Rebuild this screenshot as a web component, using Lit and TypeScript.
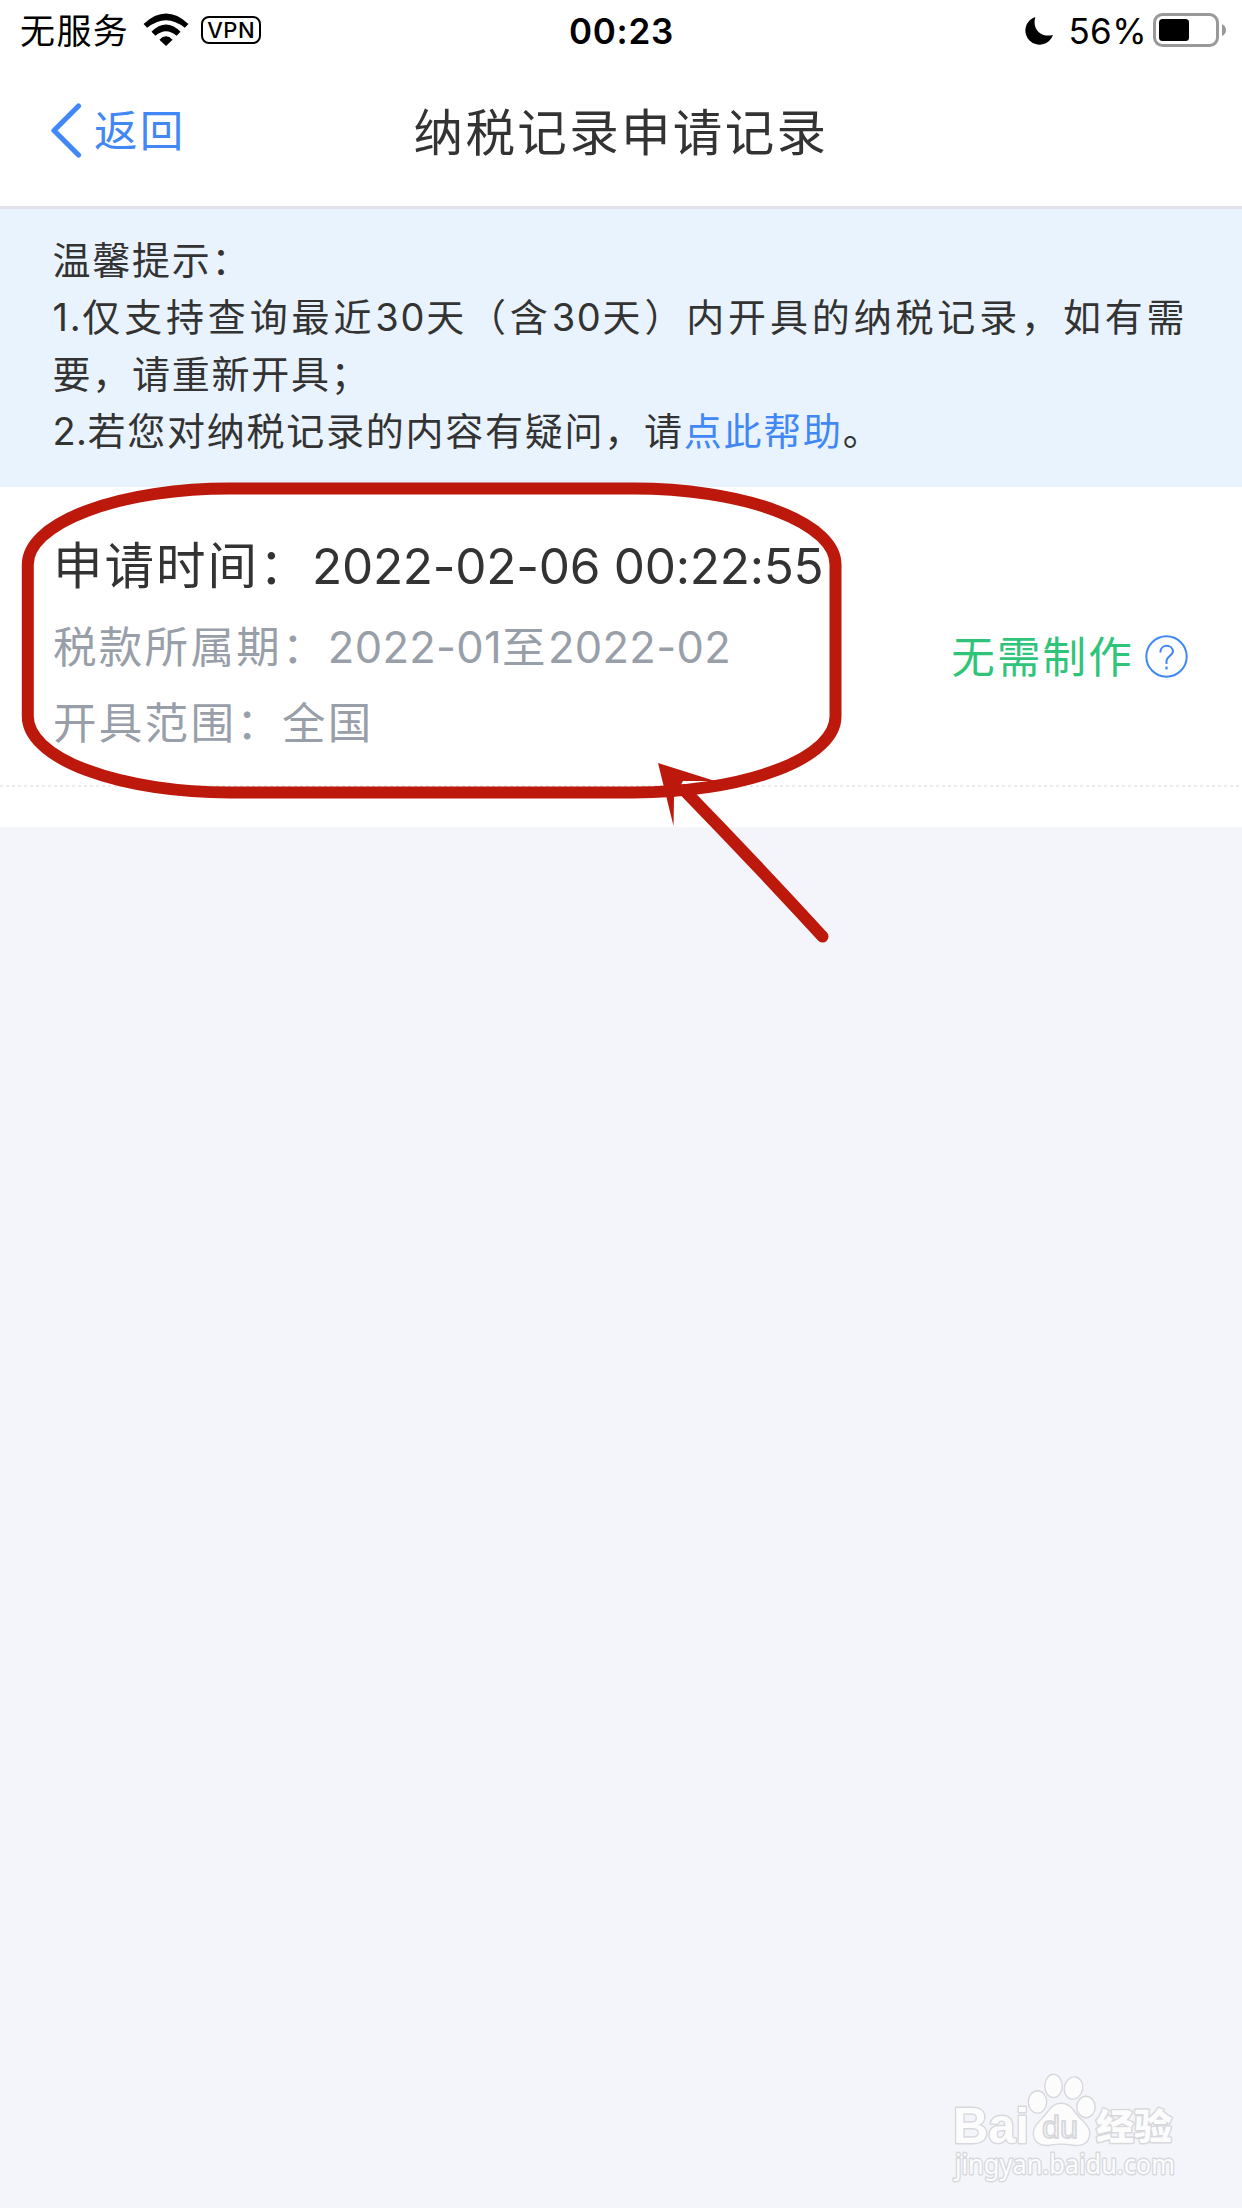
import { LitElement, html, css, svg } from "lit";
import { customElement } from "lit/decorators.js";

@customElement("status-bar")
class StatusBar extends LitElement {
  static styles = css`
    :host { display: grid; grid-template-columns: 1fr auto 1fr; align-items: center; height: 62px; padding: 0 16px 0 20px; color: #000; font-size: 35px; line-height: 1; }
    .side { display: flex; align-items: center; }
    .right { justify-content: flex-end; }
    .carrier { letter-spacing: 1.4px; padding-top: 1px; }
    .wifi { width: 46px; height: 33px; margin-left: 14px; margin-top: -3px; }
    .vpn { box-sizing: border-box; width: 60px; height: 28px; margin-left: 12px; margin-top: -2px; border: 2.4px solid #000; border-radius: 8px; font-size: 22px; font-weight: 500; line-height: 24px; text-align: center; letter-spacing: 0.6px; }
    .time { font-weight: 600; letter-spacing: 0.7px; margin-right: 3px; }
    .moon { width: 28px; height: 28px; margin-right: 15px; }
    .pct { letter-spacing: 0.4px; }
    .battery { width: 74px; height: 34px; margin-left: 6px; margin-right: -1px; margin-top: -2px; }
  `;
  render() {
    return html`
      <div class="side">
        <span class="carrier">无服务</span>
        <svg class="wifi" viewBox="429 38 138 100">
          <path d="M430 71Q498 8 566 71L555 83Q498 37 441 83Z" />
          <path d="M454 95Q498 51 542 95L530 107Q498 79 466 107Z" />
          <path d="M478 119Q498 98 518 119L498 138Z" />
        </svg>
        <span class="vpn">VPN</span>
      </div>
      <span class="time">00:23</span>
      <div class="side right">
        <svg class="moon" viewBox="138 51 84 84"><path d="M169 51A42.500 42.500 0 1 0 222 105C187 114 158 88 169 51Z" /></svg>
        <span class="pct">56%</span>
        <svg class="battery" viewBox="0 0 74 34">
          <rect x="1.500" y="1.500" width="63" height="31" rx="8" fill="none" stroke="#999" stroke-width="3" />
          <rect x="6" y="6" width="30" height="22" rx="3.500" />
          <path d="M69 11Q73 13 73 17T69 23Z" fill="#999" />
        </svg>
      </div>
    `;
  }
}

@customElement("nav-header")
class NavHeader extends LitElement {
  static styles = css`
    :host { display: grid; grid-template-columns: 1fr auto 1fr; align-items: center; box-sizing: border-box; height: 147px; padding: 0 50px 4px 50px; border-bottom: 3px solid #e2e3e8; line-height: 1; }
    .back { display: flex; align-items: center; color: #4187f6; font-size: 43.500px; letter-spacing: 2.200px; }
    .chevron { width: 32px; height: 56px; margin-right: 12px; margin-top: -4px; }
    .title { font-size: 49.500px; letter-spacing: 2.350px; color: #333; padding-top: 3px; }
  `;
  render() {
    return html`
      <span class="back">
        <svg class="chevron" viewBox="0 0 32 56"><path d="M28.500 4L4 28.500L28.500 53" fill="none" stroke="#4187f6" stroke-width="5.200" stroke-linecap="round" stroke-linejoin="round" /></svg>
        返回
      </span>
      <span class="title">纳税记录申请记录</span>
      <span></span>
    `;
  }
}

@customElement("tip-box")
class TipBox extends LitElement {
  static styles = css`
    :host { display: block; box-sizing: border-box; height: 278px; padding: 23px 0 0 52.5px; background: #e9f3fe; color: #333; font-size: 38px; line-height: 57px; letter-spacing: 1.750px; white-space: nowrap; }
    .wide { letter-spacing: 3.850px; }
    .num { letter-spacing: 0.400px; }
    .wide .num { letter-spacing: 1.700px; }
    .link { color: #4187f6; }
  `;
  render() {
    return html`
      <div>温馨提示：</div>
      <div class="wide"><span class="num">1.</span>仅支持查询最近<span class="num">30</span>天（含<span class="num">30</span>天）内开具的纳税记录，如有需</div>
      <div>要，请重新开具；</div>
      <div><span class="num">2.</span>若您对纳税记录的内容有疑问，请<span class="link">点此帮助</span>。</div>
    `;
  }
}

@customElement("record-card")
class RecordCard extends LitElement {
  static styles = css`
    :host { display: block; box-sizing: border-box; height: 340px; background: #fff; }
    .row { display: flex; justify-content: space-between; box-sizing: border-box; height: 298px; padding: 40px 53px 0; white-space: nowrap; }
    .rule { height: 2px; background: repeating-linear-gradient(90deg, #ebebeb 0 3px, #fff 3px 6px); }
    .info { color: #999fa9; font-size: 43.500px; letter-spacing: 2.300px; line-height: 69px; }
    .main { color: #333; font-size: 49.500px; letter-spacing: 2.000px; line-height: 78px; }
    .main .date { margin-left: 1.500px; letter-spacing: -0.250px; }
    .period { line-height: 84px; }
    .date { letter-spacing: 0.300px; }
    .status { display: flex; align-items: center; height: 60px; margin-top: 97px; color: #30c47b; font-size: 43.500px; letter-spacing: 2.200px; }
    .help { width: 43px; height: 43px; margin-left: 11px; margin-right: 1px; margin-top: 5px; }
  `;
  render() {
    return html`
      <div class="row">
        <div class="info">
          <div class="main">申请时间：<span class="date">2022-02-06 00:22:55</span></div>
          <div class="period">税款所属期：<span class="date">2022-01</span>至<span class="date">2022-02</span></div>
          <div>开具范围：全国</div>
        </div>
        <div class="status">
          无需制作
          <svg class="help" viewBox="0 0 43 43" fill="none" stroke="#4187f6">
            <circle cx="21.500" cy="21.500" r="20.200" stroke-width="2" />
            <path d="M15.500 17.500V16A6.300 6 0 0 1 28 16C28 20.500 21.500 21.500 21.500 26V29" stroke-width="2" />
            <path d="M21.500 31.500V34.500" stroke-width="2.200" />
          </svg>
        </div>
      </div>
      <div class="rule"></div>
    `;
  }
}

@customElement("app-root")
class AppRoot extends LitElement {
  static styles = css`
    :host { display: block; position: relative; width: 1242px; height: 2208px; overflow: hidden; background: #fff; font-family: Inter, "Noto Sans CJK SC", sans-serif; }
    .page { display: flex; flex-direction: column; height: 100%; }
    .rest { flex: 1; background: #f4f5fa; }
    .overlay { position: absolute; inset: 0; width: 1242px; height: 2208px; pointer-events: none; }
    .mark { fill: #fcfcfd; stroke: #d6d8dc; stroke-width: 2.800px; paint-order: stroke; stroke-linejoin: round; }
    .brand { font: bold 50px "Liberation Sans", sans-serif; }
    .brand-zh { font: 900 36px "Noto Sans CJK SC", sans-serif; }
    .du { font: 32px "Liberation Sans", sans-serif; paint-order: normal; stroke-width: 1.800px; }
    .url { font: 27px "Noto Sans", sans-serif; }
  `;

  private watermark() {
    return svg`
      <g class="mark">
        <text class="brand" x="953" y="2143" textLength="76" lengthAdjust="spacingAndGlyphs">Bai</text>
        <ellipse cx="1037.500" cy="2102" rx="8.500" ry="10.500" />
        <ellipse cx="1053.500" cy="2086" rx="8" ry="11" />
        <ellipse cx="1073.500" cy="2088" rx="8.500" ry="10.500" transform="rotate(12 1073.500 2088)" />
        <ellipse cx="1086" cy="2107" rx="8.500" ry="10" />
        <path d="M1061 2104C1070 2104 1073 2111 1078 2117C1084 2123 1090 2128 1089 2135C1088 2143 1081 2146 1073 2144.500C1065 2143 1057 2143 1050 2144.500C1041 2146 1034 2142 1034 2133C1034 2126 1041 2121 1046 2115C1050 2110 1053 2104 1061 2104Z" />
        <text class="du" x="1042" y="2138" textLength="36" lengthAdjust="spacingAndGlyphs">du</text>
        <text class="brand-zh" x="1096" y="2140" textLength="76" lengthAdjust="spacingAndGlyphs">经验</text>
        <text class="url" x="955" y="2174" textLength="220" lengthAdjust="spacingAndGlyphs">jingyan.baidu.com</text>
      </g>
    `;
  }

  render() {
    return html`
      <div class="page" lang="zh-CN">
        <status-bar></status-bar>
        <nav-header></nav-header>
        <tip-box></tip-box>
        <record-card></record-card>
        <div class="rest"></div>
      </div>
      <svg class="overlay" viewBox="0 0 1242 2208" lang="zh-CN">
        <rect x="27.800" y="488.500" width="807.700" height="304" rx="202" ry="76" fill="none" stroke="#bc180b" stroke-width="12" />
        <path d="M822.500 936.500Q755 863 684 790" fill="none" stroke="#bc180b" stroke-width="12" stroke-linecap="round" />
        <path d="M658 763L715 781L683 781L674 797L673.500 826Z" fill="#bc180b" />
        ${this.watermark()}
      </svg>
    `;
  }
}
